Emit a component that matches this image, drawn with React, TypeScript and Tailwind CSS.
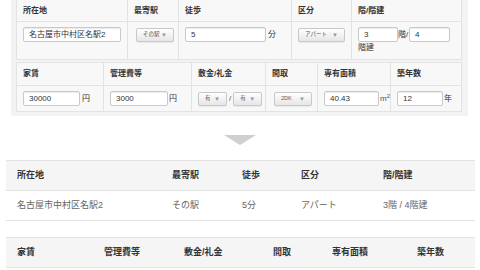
import React from "react";

const font = { fontFamily: '"Liberation Sans", "Noto Sans CJK JP", sans-serif' };

function Input({ w, value }: { w: string; value: string }) {
  return (
    <div
      className={`${w} h-[15px] bg-white border border-[#c9c9c9] rounded-[2px] shadow-[inset_0_1px_1px_rgba(0,0,0,0.08)] flex items-center pl-[5px] text-[8px] text-[#333] leading-none`}
    >
      {value}
    </div>
  );
}

function Select({ w, label }: { w: string; label: string }) {
  return (
    <div
      className={`${w} h-[14px] border border-[#c8c8c8] rounded-[2px] bg-gradient-to-b from-white to-[#e6e6e6] shadow-[0_1px_1px_rgba(0,0,0,0.06)] flex items-center justify-between pl-[6px] pr-[6px] text-[5.5px] text-[#555] leading-none`}
    >
      <span>{label}</span>
      <span className="text-[6px] text-[#999]">▼</span>
    </div>
  );
}

function HCell({ w, children, last }: { w: string; children: React.ReactNode; last?: boolean }) {
  return (
    <div
      className={`${w} shrink-0 h-full flex items-center pl-[6px] text-[8px] font-bold text-[#333] ${last ? "" : "border-r border-[#e3e3e3]"}`}
    >
      {children}
    </div>
  );
}

function BCell({ w, children, last, cls = "" }: { w: string; children: React.ReactNode; last?: boolean; cls?: string }) {
  return (
    <div
      className={`${w} shrink-0 h-full pl-[6px] text-[8px] text-[#333] ${last ? "" : "border-r border-[#e3e3e3]"} ${cls}`}
    >
      {children}
    </div>
  );
}

export default function App() {
  return (
    <div className="w-[480px] h-[270px] overflow-hidden bg-white" style={font}>
      {/* top panel */}
      <div className="ml-[11px] w-[457px] h-[116px] bg-[#f3f3f3] pl-[5px] pr-[6px] flex flex-col">
        {/* table 1 */}
        <div className="w-[446px] border-x border-b border-[#e3e3e3] bg-[#f8f8f8]">
          <div className="h-[22px] flex border-b border-[#e3e3e3]">
            <HCell w="w-[111px]">所在地</HCell>
            <HCell w="w-[51px]">最寄駅</HCell>
            <HCell w="w-[113px]">徒歩</HCell>
            <HCell w="w-[60px]">区分</HCell>
            <HCell w="w-[111px]" last>
              階/階建
            </HCell>
          </div>
          <div className="h-[37px] flex">
            <BCell w="w-[111px]" cls="pt-[5px]">
              <Input w="w-[98px]" value="名古屋市中村区名駅2" />
            </BCell>
            <BCell w="w-[51px]" cls="pt-[6px] pl-[8px]">
              <Select w="w-[38px]" label="その駅" />
            </BCell>
            <BCell w="w-[113px]" cls="pt-[5px]">
              <div className="flex items-center">
                <Input w="w-[81px]" value="5" />
                <span className="ml-[2px] text-[8px] text-[#333]">分</span>
              </div>
            </BCell>
            <BCell w="w-[60px]" cls="pt-[6px]">
              <Select w="w-[47px]" label="アパート" />
            </BCell>
            <BCell w="w-[111px]" last cls="pt-[5px]">
              <div className="flex items-center">
                <Input w="w-[40px]" value="3" />
                <span className="text-[8px] text-[#333] w-[11px]">階/</span>
                <Input w="w-[41px]" value="4" />
              </div>
              <div className="text-[8px] text-[#333] leading-none mt-[2px]">階建</div>
            </BCell>
          </div>
        </div>
        {/* table 2 */}
        <div className="mt-[2px] w-[446px] border border-[#e3e3e3] bg-[#f8f8f8]">
          <div className="h-[23px] flex border-b border-[#e3e3e3]">
            <HCell w="w-[87px]">家賃</HCell>
            <HCell w="w-[88px]">管理費等</HCell>
            <HCell w="w-[74px]">敷金/礼金</HCell>
            <HCell w="w-[52px]">間取</HCell>
            <HCell w="w-[73px]">専有面積</HCell>
            <HCell w="w-[72px]" last>
              築年数
            </HCell>
          </div>
          <div className="h-[25px] flex">
            <BCell w="w-[87px]" cls="flex items-center">
              <Input w="w-[57px]" value="30000" />
              <span className="ml-[2px]">円</span>
            </BCell>
            <BCell w="w-[88px]" cls="flex items-center">
              <Input w="w-[58px]" value="3000" />
              <span className="ml-[1px]">円</span>
            </BCell>
            <BCell w="w-[74px]" cls="flex items-center">
              <Select w="w-[29px]" label="有" />
              <span className="mx-[2px] text-[#555]">/</span>
              <Select w="w-[29px]" label="有" />
            </BCell>
            <BCell w="w-[52px]" cls="flex items-center pl-[8px]">
              <Select w="w-[38px]" label="2DK" />
            </BCell>
            <BCell w="w-[73px]" cls="flex items-center pl-[5px]">
              <Input w="w-[59px]" value="40.43" />
              <span className="ml-[1px] text-[#555]">
                m<sup className="text-[6px]">2</sup>
              </span>
            </BCell>
            <BCell w="w-[72px]" last cls="flex items-center">
              <Input w="w-[46px]" value="12" />
              <span className="ml-[1px]">年</span>
            </BCell>
          </div>
        </div>
      </div>

      {/* arrow */}
      <div className="mt-[19px] flex justify-center">
        <div className="w-0 h-0 border-l-[16px] border-r-[16px] border-t-[10px] border-l-transparent border-r-transparent border-t-[#cfcfcf]" />
      </div>

      {/* bottom table 1 */}
      <div className="mt-[15px] ml-[6px] w-[469px]">
        <div className="h-[31px] flex items-center bg-[#f5f5f5] border-y border-[#e3e3e3] text-[9px] font-bold text-[#333]">
          <div className="w-[155px] pl-[11px]">所在地</div>
          <div className="w-[70px] pl-[11px]">最寄駅</div>
          <div className="w-[59px] pl-[11px]">徒歩</div>
          <div className="w-[82px] pl-[11px]">区分</div>
          <div className="w-[103px] pl-[11px]">階/階建</div>
        </div>
        <div className="h-[30px] flex items-center border-b border-[#e3e3e3] text-[9px] text-[#666]">
          <div className="w-[155px] pl-[11px]">名古屋市中村区名駅2</div>
          <div className="w-[70px] pl-[11px]">その駅</div>
          <div className="w-[59px] pl-[11px]">5分</div>
          <div className="w-[82px] pl-[11px]">アパート</div>
          <div className="w-[103px] pl-[11px]">3階 / 4階建</div>
        </div>
      </div>

      {/* bottom table 2 */}
      <div className="mt-[16px] ml-[6px] w-[469px]">
        <div className="h-[31px] flex items-center bg-[#f5f5f5] border-y border-[#e3e3e3] text-[9px] font-bold text-[#333]">
          <div className="w-[87px] pl-[11px]">家賃</div>
          <div className="w-[80px] pl-[11px]">管理費等</div>
          <div className="w-[89px] pl-[11px]">敷金/礼金</div>
          <div className="w-[59px] pl-[11px]">間取</div>
          <div className="w-[85px] pl-[11px]">専有面積</div>
          <div className="w-[69px] pl-[11px]">築年数</div>
        </div>
      </div>
    </div>
  );
}
